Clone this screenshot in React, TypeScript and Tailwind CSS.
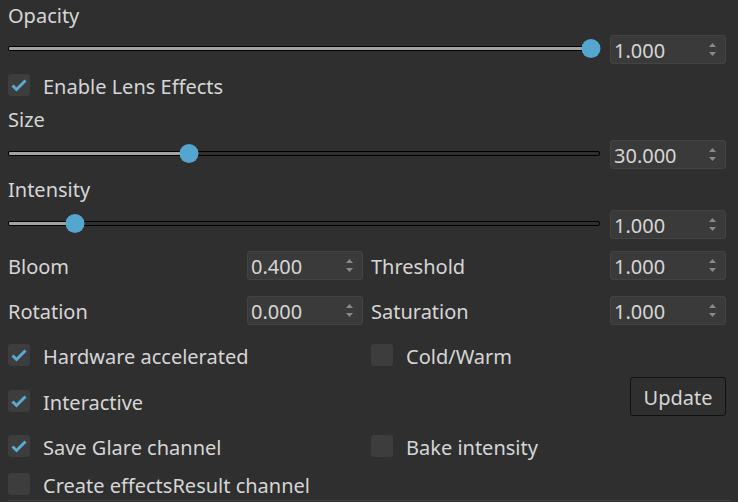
import React from "react";

const font = { fontFamily: '"Noto Sans", "Open Sans", sans-serif' };

function Spin({ value }: { value: string }) {
  return (
    <div className="relative flex h-[29px] w-[116px] shrink-0 items-center rounded-[3px] border border-[#444444] bg-[#3a3a3a] pl-[3px] pt-[2px] text-[20px] leading-none text-[#d6d6d6]">
      <span>{value}</span>
      <svg className="absolute right-[8px] top-[6px]" width="9" height="15" viewBox="0 0 9 15">
        <path d="M4.5 1 L8 5 L1 5 Z" fill="#8a8a8a" />
        <path d="M1 10 L8 10 L4.5 14 Z" fill="#8a8a8a" />
      </svg>
    </div>
  );
}

function Slider({ p, value }: { p: number; value: string }) {
  // thumb travels from 9.5px to 582.5px inside the 592px groove
  const left = 9.5 + p * 573;
  return (
    <div className="flex h-[29px] items-center">
      <div className="relative h-[29px] w-[592px] shrink-0">
        <div className="absolute left-0 right-0 top-[11px] h-[5px] rounded-[2px] border border-black bg-[#2f2f2f]" />
        <div
          className="absolute left-0 top-[11px] h-[5px] rounded-l-[2px] border border-black bg-[#a3a3a3]"
          style={{ width: left }}
        />
        <div
          className="absolute top-[4px] h-[19px] w-[19px] -translate-x-1/2 rounded-full bg-[#55a6cf]"
          style={{ left }}
        />
      </div>
      <div className="ml-[10px]">
        <Spin value={value} />
      </div>
    </div>
  );
}

function Check({ label, checked }: { label: string; checked?: boolean }) {
  return (
    <div className="flex h-[22px] items-center">
      <div className="flex h-[22px] w-[22px] shrink-0 items-center justify-center rounded-[3px] bg-[#3d3d3d]">
        {checked && (
          <svg width="22" height="22" viewBox="0 0 22 22">
            <path d="M4.5 11.5 L8.5 15.5 L17.5 6.5" fill="none" stroke="#5aaad6" strokeWidth="3" />
          </svg>
        )}
      </div>
      <span className="ml-[13px] whitespace-nowrap pt-[3px] text-[20px] leading-none text-[#d6d6d6]">{label}</span>
    </div>
  );
}

function Label({ text, className = "" }: { text: string; className?: string }) {
  return <div className={`h-[24px] text-[20px] leading-[24px] text-[#d6d6d6] ${className}`}>{text}</div>;
}

function PairRow({ a, av, b, bv, className = "" }: { a: string; av: string; b: string; bv: string; className?: string }) {
  return (
    <div className={`flex h-[29px] items-center text-[20px] leading-none text-[#d6d6d6] ${className}`}>
      <div className="w-[239px] pt-[2px]">{a}</div>
      <Spin value={av} />
      <div className="ml-[8px] w-[239px] pt-[2px]">{b}</div>
      <Spin value={bv} />
    </div>
  );
}

export default function App() {
  return (
    <div className="h-[502px] w-[738px] overflow-hidden bg-[#2f2f2f] px-[8px]" style={font}>
      <Label text="Opacity" className="mt-[4px]" />
      <div className="mt-[7px]">
        <Slider p={1} value="1.000" />
      </div>
      <div className="mt-[10px]">
        <Check label="Enable Lens Effects" checked />
      </div>
      <Label text="Size" className="mt-[12px]" />
      <div className="mt-[8px]">
        <Slider p={0.3} value="30.000" />
      </div>
      <Label text="Intensity" className="mt-[9px]" />
      <div className="mt-[8px]">
        <Slider p={0.1} value="1.000" />
      </div>
      <PairRow a="Bloom" av="0.400" b="Threshold" bv="1.000" className="mt-[12px]" />
      <PairRow a="Rotation" av="0.000" b="Saturation" bv="1.000" className="mt-[16px]" />

      <div className="mt-[19px] flex">
        <div className="w-[363px]">
          <Check label="Hardware accelerated" checked />
        </div>
        <Check label="Cold/Warm" />
      </div>

      <div className="mt-[11px] flex h-[39px] items-start justify-between">
        <div className="mt-[13px]">
          <Check label="Interactive" checked />
        </div>
        <button className="mr-[4px] h-[39px] w-[96px] rounded-[3px] border border-[#111111] bg-[#2f2f2f] pt-[2px] text-[20px] leading-none text-[#d6d6d6]">
          Update
        </button>
      </div>

      <div className="mt-[19px] flex">
        <div className="w-[363px]">
          <Check label="Save Glare channel" checked />
        </div>
        <Check label="Bake intensity" />
      </div>

      <div className="mt-[16px]">
        <Check label="Create effectsResult channel" />
      </div>
      <div className="mt-[5px] h-px bg-[#444444]" />
    </div>
  );
}
